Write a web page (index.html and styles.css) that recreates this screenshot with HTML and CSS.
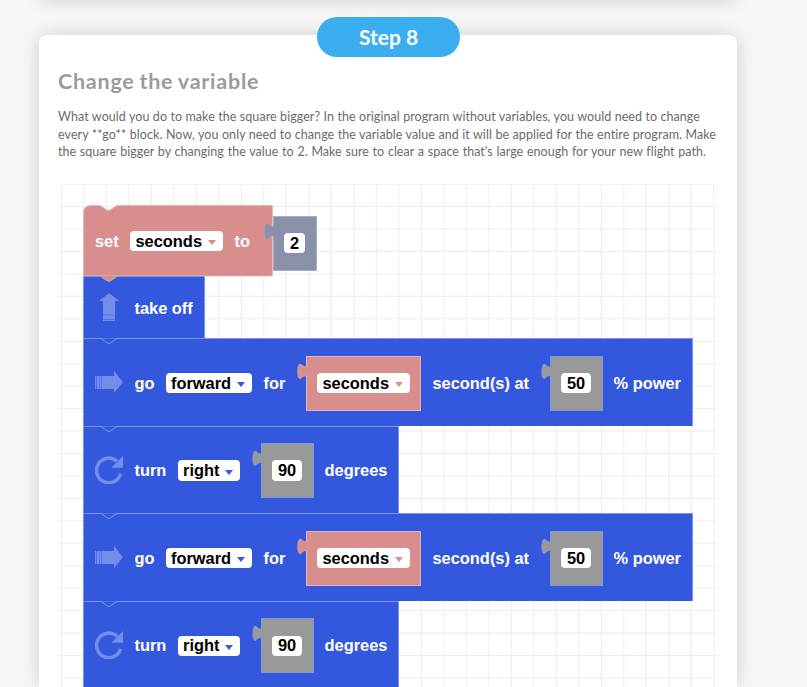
FILE: index.html
```html
<!DOCTYPE html>
<html lang="en">
<head>
<meta charset="utf-8">
<title>Step 8</title>
<link rel="stylesheet" href="styles.css">
</head>
<body>
<svg width="0" height="0" class="defs" aria-hidden="true">
  <symbol id="notch" viewBox="0 0 20 7"><path d="M0 0H1L7.3 4.5Q8.8 5.3 10.3 4.5L17 0H20" transform="translate(0 .5)" stroke-width="1"/></symbol>
  <symbol id="notch-fill" viewBox="0 0 20 7"><path d="M1 0H17V.5L10.3 5Q8.8 5.8 7.3 5L1 .5Z" stroke="none"/><path d="M1 .5L7.3 5Q8.8 5.8 10.3 5L17 .5" fill="none" stroke-width=".8"/></symbol>
  <symbol id="tab" viewBox="0 0 11 18"><path d="M11 3.8C7.5 5.8 6 4 4.4 2.5C2 1 .8 4 .8 9.5C.8 14.5 1.6 17.5 3.8 16.5C5.8 14.5 7.5 13 11 14.3"/></symbol>
  <symbol id="forward" viewBox="0 0 28 22"><path d="M0 5H1.2V18H0ZM1.8 5H4.2V18H1.8ZM4.6 5H6.2V18H4.6ZM6.7 5H19V0L28 11.3L19 22V18H6.7Z"/></symbol>
  <symbol id="up" viewBox="0 0 20 28"><path d="M10 0L20 8H16V21.8H4V8H0ZM4 22.2H16V23.4H4ZM4 23.6H16V26.5H4ZM4 27H16V28H4Z"/></symbol>
  <symbol id="turn" viewBox="0 0 28 28"><path d="M25.6 18A12.3 12.3 0 1 1 22 5.2" fill="none" stroke="#728ee8" stroke-width="3.5"/><path d="M28 0V11.7H16.3Z"/></symbol>
</svg>
<div class="previous-card"></div>
<main class="card">
  <div class="step">Step 8</div>
  <h1>Change the variable</h1>
  <div class="copy">
    <div class="l1">What would you do to make the square bigger? In the original program without variables, you would need to change</div>
    <div class="l2">every **go** block. Now, you only need to change the variable value and it will be applied for the entire program. Make</div>
    <div class="l3">the square bigger by changing the value to 2. Make sure to clear a space that's large enough for your new flight path.</div>
  </div>
  <div class="workspace">
    <svg class="grid" width="660" height="510"><defs><pattern id="cells" x="2.8" y="-.4" width="22.5" height="22.45" patternUnits="userSpaceOnUse"><path d="M.5 0V22.5M0 .5H22.5" stroke="#ececec" fill="none"/></pattern></defs><path d="M0 22H660V510H0ZM3 3Q3 0 6 0H656V22H3Z" fill="url(#cells)"/></svg>
    <div class="program">
      <div class="block set">
        <svg class="outline" width="190" height="72" viewBox="0 0 190 72"><path d="M.5 71V8Q.5.5 8 .5H17L23.3 4.8Q25.3 5.8 27.3 4.8L34 .5H189.3V71Z" fill="#d88e8d" stroke="#e6b5b4"/></svg>
        <span>set</span><span class="pill red">seconds<i></i></span><span>to</span>
        <span class="value slate"><svg class="tab"><use href="#tab"/></svg><b class="pill">2</b></span>
      </div>
      <div class="block takeoff"><svg class="notch joined"><use href="#notch-fill"/></svg><svg class="icon up"><use href="#up"/></svg><span>take off</span></div>
      <div class="block go"><svg class="notch"><use href="#notch"/></svg><svg class="icon forward"><use href="#forward"/></svg><span>go</span><span class="pill">forward<i></i></span><span>for</span><span class="value rose"><svg class="tab"><use href="#tab"/></svg><b class="pill red">seconds<i></i></b></span><span>second(s) at</span><span class="value gray"><svg class="tab"><use href="#tab"/></svg><b class="pill">50</b></span><span>% power</span></div>
      <div class="block turn"><svg class="notch"><use href="#notch"/></svg><svg class="icon rotate"><use href="#turn"/></svg><span>turn</span><span class="pill">right<i></i></span><span class="value gray"><svg class="tab"><use href="#tab"/></svg><b class="pill">90</b></span><span>degrees</span></div>
      <div class="block go"><svg class="notch"><use href="#notch"/></svg><svg class="icon forward"><use href="#forward"/></svg><span>go</span><span class="pill">forward<i></i></span><span>for</span><span class="value rose"><svg class="tab"><use href="#tab"/></svg><b class="pill red">seconds<i></i></b></span><span>second(s) at</span><span class="value gray"><svg class="tab"><use href="#tab"/></svg><b class="pill">50</b></span><span>% power</span></div>
      <div class="block turn"><svg class="notch"><use href="#notch"/></svg><svg class="icon rotate"><use href="#turn"/></svg><span>turn</span><span class="pill">right<i></i></span><span class="value gray"><svg class="tab"><use href="#tab"/></svg><b class="pill">90</b></span><span>degrees</span></div>
    </div>
  </div>
</main>
</body>
</html>
```
FILE: styles.css
```css
* { box-sizing: border-box; }
body {
  margin: 0;
  height: 687px;
  overflow: hidden;
  background: #f7f7f7;
  font-family: "Century Gothic", Lato, sans-serif;
}
.defs { position: absolute; }
.previous-card, .card {
  width: 698px;
  margin-left: 39px;
  background: #fff;
  border-radius: 8px;
  box-shadow: 0 0 20px rgba(0, 0, 0, .16);
}
.previous-card { height: 35px; margin-top: -35px; }
.card {
  margin-top: 35px;
  height: 652px;
  padding: 0 19px;
  border-radius: 8px 8px 0 0;
}
.step {
  position: relative;
  top: -18px;
  width: 143px;
  height: 40px;
  margin-left: 259px;
  border-radius: 20px;
  background: #3baef0;
  color: #fff;
  font-size: 21px;
  font-weight: 700;
  line-height: 39px;
  text-align: center;
}
h1 {
  width: 200px;
  margin: -8px 0 0;
  color: #9b9b9b;
  font-size: 21.5px;
  line-height: 29px;
  letter-spacing: .75px;
  word-spacing: -1px;
  white-space: nowrap;
  text-align-last: justify;
}
.copy {
  margin-top: 12px;
  color: #6b6b6b;
  font-size: 12.5px;
  line-height: 17.6px;
  white-space: nowrap;
}
.copy div { text-align-last: justify; }
.l1 { width: 642px; letter-spacing: .06px; }
.l2 { width: 658px; letter-spacing: .07px; }
.l3 { width: 648px; letter-spacing: .02px; }
.workspace {
  position: relative;
  height: 503px;
  margin-top: 23px;
  padding: 21px 0 0 25px;
  overflow: hidden;
}
.grid { position: absolute; left: 0; top: 0; }
.program {
  position: relative;
  color: #fff;
  font: 700 16.4px "Liberation Sans", sans-serif;
}
.block {
  position: relative;
  display: grid;
  align-items: center;
  justify-items: start;
  height: 87.6px;
  padding: 1px 0 0 11px;
  background: #3358de;
  border: 1px solid #7b95e9;
  border-bottom: 0;
  white-space: nowrap;
}
.set {
  width: 190px;
  height: 71px;
  grid-template-columns: 35px 104.5px 38px 44px;
  background: none;
  border-color: transparent;
}
.outline { position: absolute; left: -1px; top: -1px; }
.set > span { position: relative; }
.takeoff { width: 121.5px; height: 62.5px; grid-template-columns: 39.5px 1fr; }
.go { width: 610px; grid-template-columns: 39.5px 31px 98px 42px 127px 117px 64px 1fr; }
.turn { width: 316px; grid-template-columns: 39.5px 43px 83px 64px 1fr; }
.icon { fill: #728ee8; }
.forward { width: 28px; height: 22px; margin-top: -2px; }
.rotate { width: 28px; height: 28px; margin-top: -2px; }
.up { width: 20px; height: 28px; margin: -2px 0 0 4px; }
.notch {
  position: absolute;
  left: 16px;
  top: -1px;
  width: 20px;
  height: 7px;
  fill: #3358de;
  stroke: #7b95e9;
}
.joined { fill: #d88e8d; stroke: #e6b5b4; }
.pill {
  display: inline-flex;
  align-items: center;
  height: 20.4px;
  padding: 0 6.5px 0 5.5px;
  border-radius: 4px;
  background: #fff;
  color: #000;
  --arrow: #3358de;
}
.red { --arrow: #d88e8d; }
.pill i {
  margin: 3px 0 0 6px;
  border: 4.5px solid transparent;
  border-top: 5px solid var(--arrow);
  border-bottom: 0;
}
.value {
  position: relative;
  display: flex;
  align-items: center;
  height: 55px;
  padding: 0 10.5px;
  border: 1px solid #8296d9;
  background: var(--fill);
}
.value .pill { padding-left: 6px; padding-right: 6px; }
.value .pill.red { padding-left: 5.5px; padding-right: 6.5px; }
.slate { --fill: #8b90aa; border-color: #a9adc2; margin-top: 4px; }
.rose { --fill: #d88e8d; border-color: #e3b2bf; }
.gray { --fill: #999; }
.tab {
  position: absolute;
  left: -10px;
  top: 5px;
  width: 11px;
  height: 18px;
  fill: var(--fill);
  stroke: #8296d9;
  stroke-width: .6px;
}
.rose .tab { stroke: #e3b2bf; }
```
